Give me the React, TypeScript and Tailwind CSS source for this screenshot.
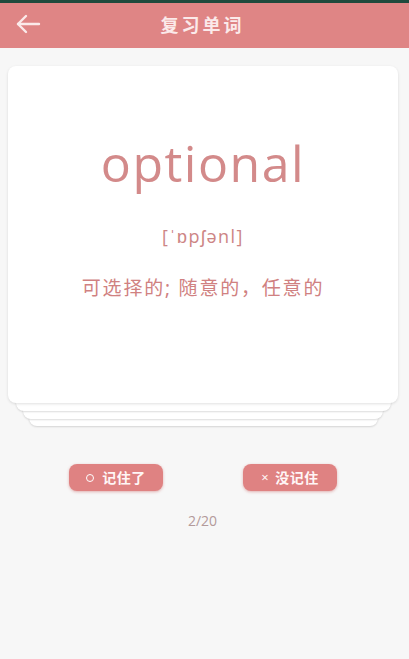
export default function App() {
  return (
    <div
      className="w-[409px] h-[659px] bg-[#f7f7f7] flex flex-col overflow-hidden"
      style={{ fontFamily: '"Noto Sans", "Noto Sans CJK SC", sans-serif' }}
    >
      <div className="h-[3px] bg-[#1f4a3d]" />
      <header className="h-[45px] bg-[#df8585] flex items-center relative">
        <button className="absolute left-[15px] top-[10px] text-[#fbeaea]">
          <svg width="26" height="22" viewBox="0 0 26 22" fill="none" stroke="currentColor" strokeWidth="2.4" strokeLinecap="round" strokeLinejoin="round">
            <path d="M24 11H3" />
            <path d="M11 3L3 11L11 19" />
          </svg>
        </button>
        <h1 className="flex-1 text-center text-[18px] font-bold text-[#fbeaea] tracking-[3px] pr-[4px]">复习单词</h1>
      </header>

      <div className="flex flex-col items-center mt-[18px] pr-[3px]">
        <div className="relative w-[390px] h-[337px] bg-white rounded-[8px] shadow-[0_1px_3px_rgba(0,0,0,0.12)] z-30 flex flex-col items-center">
          <div
            className="mt-[72px] text-[50px] leading-none font-normal text-[#d38a8a] tracking-[1.5px]"
            style={{ fontFamily: '"Open Sans", sans-serif' }}
          >
            optional
          </div>
          <div className="mt-[35px] text-[18px] text-[#cd8585] tracking-[1.5px]" style={{ fontFamily: '"Open Sans", sans-serif' }}>
            [ˈɒpʃənl]
          </div>
          <div className="mt-[24px] text-[19px] text-[#d08181] tracking-[1.8px]">可选择的; 随意的，任意的</div>
        </div>
        <div className="w-[375px] h-[12px] -mt-[4px] bg-white rounded-b-[8px] shadow-[0_1px_2px_rgba(0,0,0,0.14)] z-20" />
        <div className="w-[360px] h-[12px] -mt-[4px] bg-white rounded-b-[8px] shadow-[0_1px_2px_rgba(0,0,0,0.14)] z-10" />
        <div className="w-[349px] h-[11px] -mt-[4px] bg-white rounded-b-[8px] shadow-[0_1px_2px_rgba(0,0,0,0.14)]" />
      </div>

      <div className="flex gap-[80px] pl-[69px] mt-[38px]">
        <button className="w-[94px] h-[27px] rounded-[8px] bg-[#df8282] shadow-[0_1px_3px_rgba(200,90,90,0.45)] flex items-center justify-center gap-[8px] text-[#fff6f6] text-[14px] font-bold tracking-[0.5px]">
          <span className="w-[8px] h-[8px] rounded-full border border-white" />
          记住了
        </button>
        <button className="w-[94px] h-[27px] rounded-[8px] bg-[#df8282] shadow-[0_1px_3px_rgba(200,90,90,0.45)] flex items-center justify-center gap-[6px] text-[#fff6f6] text-[14px] font-bold tracking-[0.5px]">
          <span className="text-[13px] font-normal">×</span>
          没记住
        </button>
      </div>

      <div className="mt-[19px] pr-[4px] text-center text-[14px] text-[#b39a9a]" style={{ fontFamily: '"Open Sans", sans-serif' }}>
        2/20
      </div>
    </div>
  );
}
